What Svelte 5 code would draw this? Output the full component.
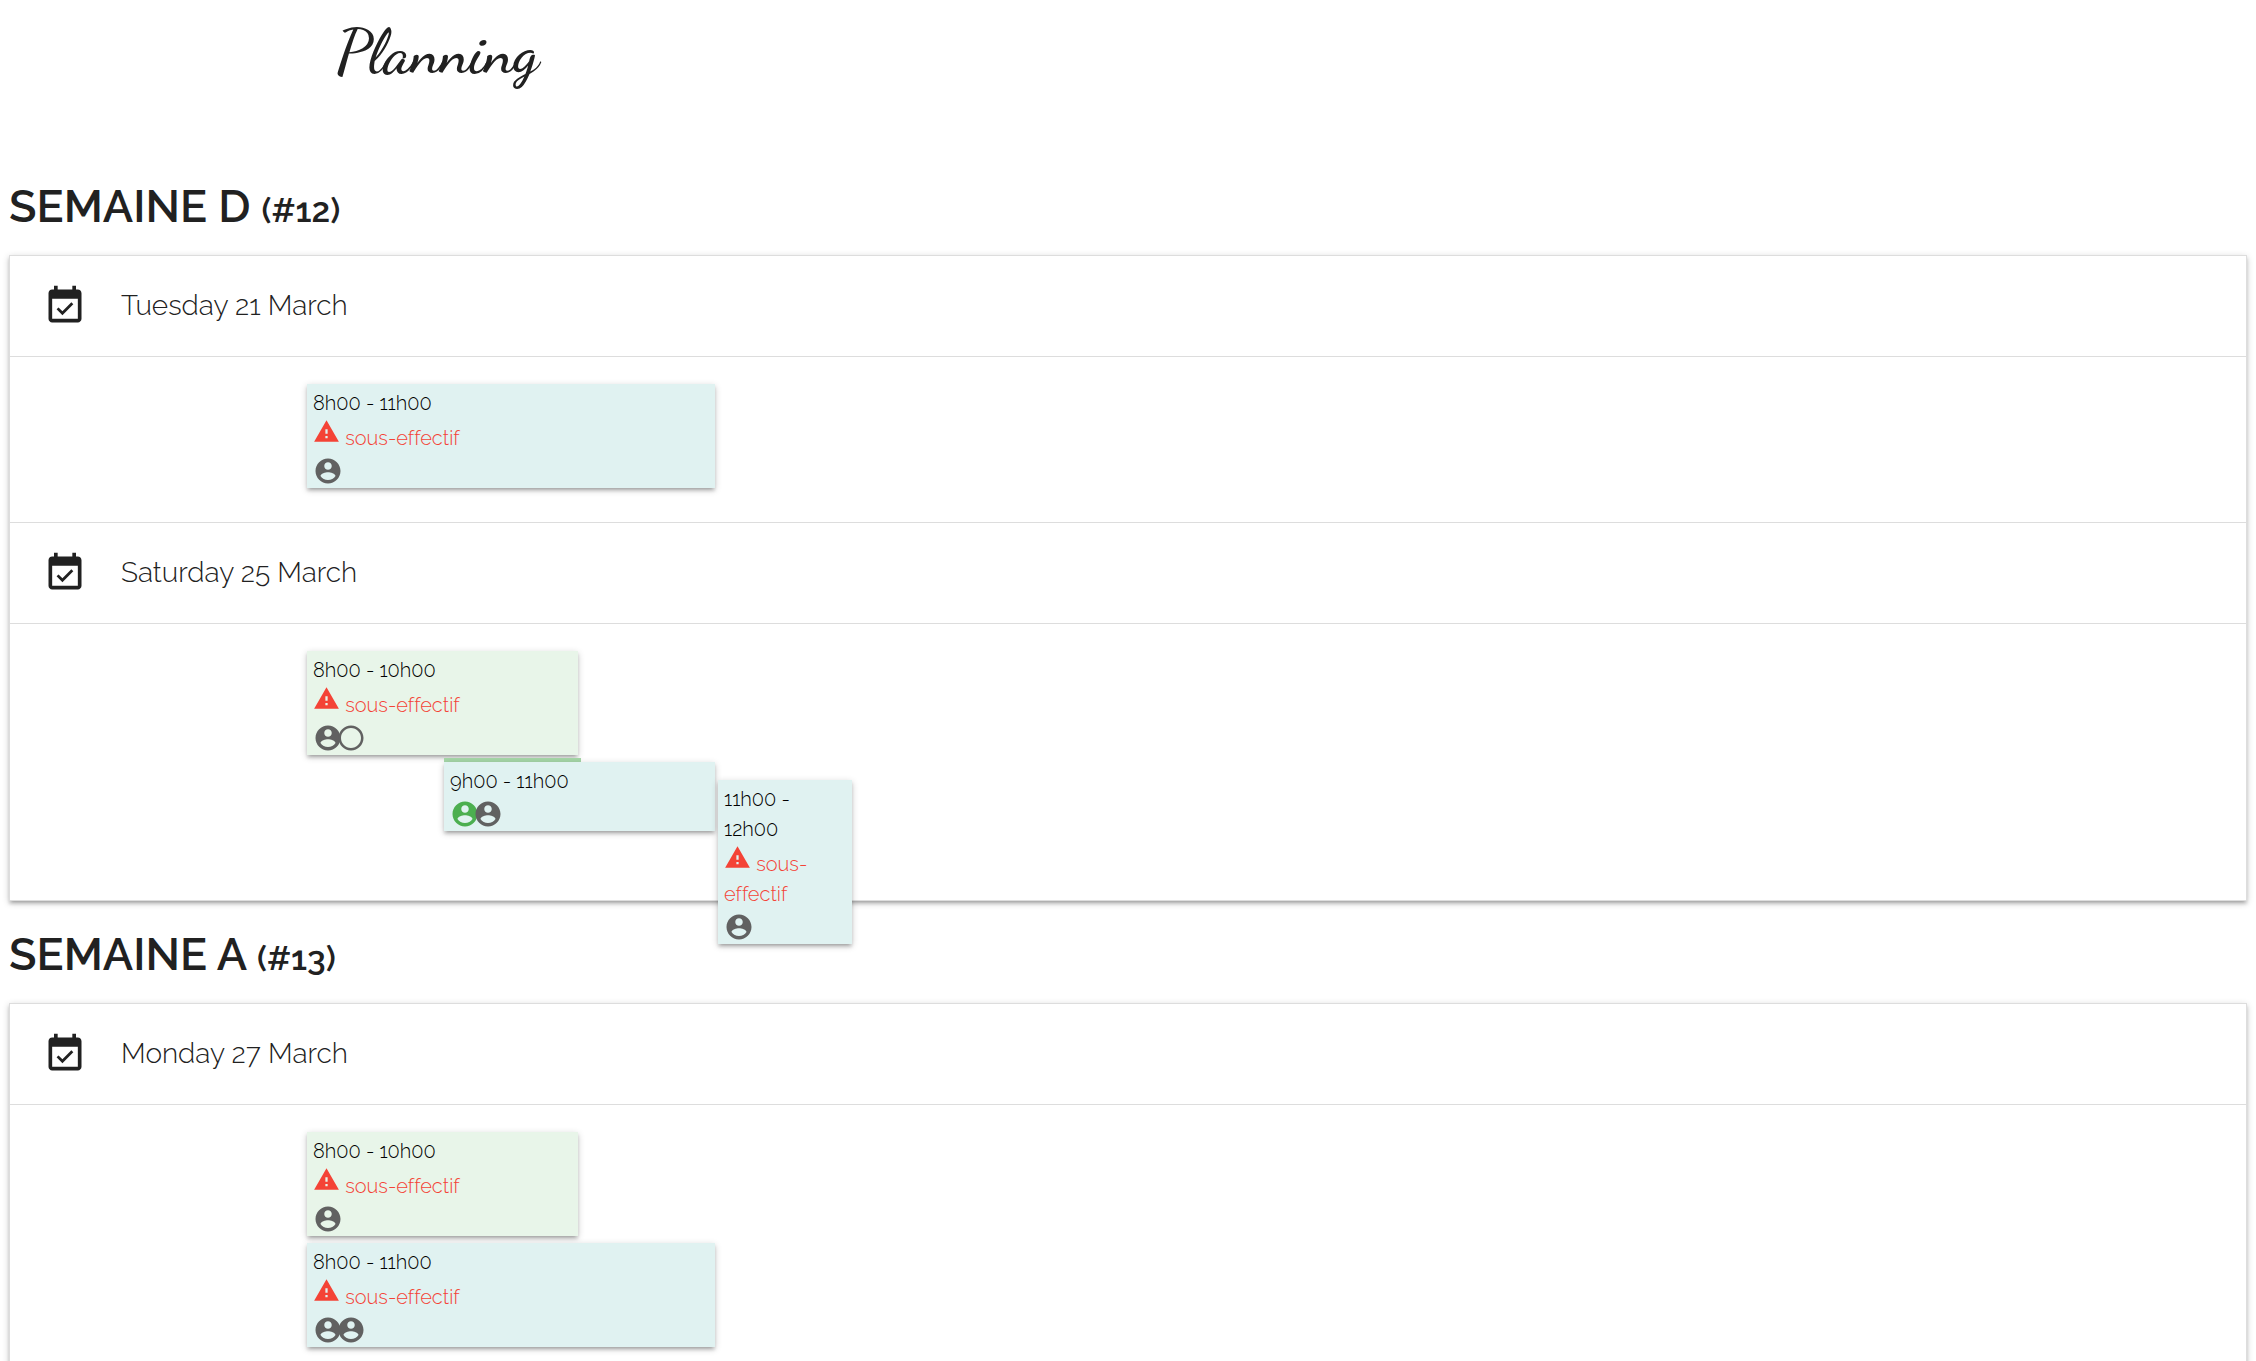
<script lang="ts">
  type Seat = 'taken' | 'mine' | 'free';

  interface Shift {
    start: number;
    end: number;
    lane: number;
    color: 'teal' | 'green';
    short: boolean;
    seats: Seat[];
    // hours shared with the shift drawn above
    overlap?: number;
  }

  interface Day {
    label: string;
    lanes: string;
    shifts: Shift[];
  }

  interface Week {
    name: string;
    number: number;
    days: Day[];
  }

  const FIRST_HOUR = 6;

  const weeks: Week[] = [
    {
      name: 'D',
      number: 12,
      days: [
        {
          label: 'Tuesday 21 March',
          lanes: 'auto',
          shifts: [
            { start: 8, end: 11, lane: 1, color: 'teal', short: true, seats: ['taken'] }
          ]
        },
        {
          label: 'Saturday 25 March',
          lanes: 'auto 11px 86px',
          shifts: [
            { start: 8, end: 10, lane: 1, color: 'green', short: true, seats: ['taken', 'free'] },
            { start: 9, end: 11, lane: 2, color: 'teal', short: false, seats: ['mine', 'taken'], overlap: 1 },
            { start: 11, end: 12, lane: 3, color: 'teal', short: true, seats: ['taken'] }
          ]
        }
      ]
    },
    {
      name: 'A',
      number: 13,
      days: [
        {
          label: 'Monday 27 March',
          lanes: 'auto auto',
          shifts: [
            { start: 8, end: 10, lane: 1, color: 'green', short: true, seats: ['taken'] },
            { start: 8, end: 11, lane: 2, color: 'teal', short: true, seats: ['taken', 'taken'] }
          ]
        }
      ]
    }
  ];

  function slotStyle(shift: Shift): string {
    const from = shift.start - FIRST_HOUR + 1;
    const to = shift.end - FIRST_HOUR + 1;
    return `grid-column: ${from} / ${to}; grid-row: ${shift.lane}`;
  }

  function overlapWidth(shift: Shift): number {
    return ((shift.overlap ?? 0) / (shift.end - shift.start)) * 100;
  }
</script>

<main>
  <h1>Planning</h1>

  {#each weeks as week}
    <section class="week">
      <h2>SEMAINE {week.name} <small>(#{week.number})</small></h2>

      <ul class="days">
        {#each week.days as day}
          <li class="day">
            <div class="day-header">
              <svg class="event-icon" viewBox="0 0 24 24" aria-hidden="true">
                <path d="M16.53 11.06L15.47 10l-4.88 4.88-2.12-2.12-1.06 1.06L10.59 17l5.94-5.94zM19 3h-1V1h-2v2H8V1H6v2H5c-1.11 0-1.99.9-1.99 2L3 19c0 1.1.89 2 2 2h14c1.1 0 2-.9 2-2V5c0-1.1-.9-2-2-2zm0 16H5V8h14v11z" />
              </svg>
              <span>{day.label}</span>
            </div>

            <div class="day-body" style="grid-template-rows: {day.lanes}">
              {#each day.shifts as shift}
                <div class="slot" style={slotStyle(shift)}>
                  {#if shift.overlap}
                    <div class="overlap" style="width: {overlapWidth(shift)}%"></div>
                  {/if}
                  <div class="shift {shift.color}">
                    <div class="hours">{shift.start}h00 - {shift.end}h00</div>
                    {#if shift.short}
                      <div class="warning">
                        <svg viewBox="0 0 24 24" aria-hidden="true">
                          <path d="M1 21h22L12 2 1 21zm12-3h-2v-2h2v2zm0-4h-2v-4h2v4z" />
                        </svg>
                        sous-effectif
                      </div>
                    {/if}
                    <div class="seats">
                      {#each shift.seats as seat}
                        <svg class={seat} viewBox="0 0 24 24" aria-hidden="true">
                          {#if seat === 'free'}
                            <path d="M12 2C6.48 2 2 6.48 2 12s4.48 10 10 10 10-4.48 10-10S17.52 2 12 2zm0 18c-4.42 0-8-3.58-8-8s3.58-8 8-8 8 3.58 8 8-3.58 8-8 8z" />
                          {:else}
                            <path d="M12 2C6.48 2 2 6.48 2 12s4.48 10 10 10 10-4.48 10-10S17.52 2 12 2zm0 3c1.66 0 3 1.34 3 3s-1.34 3-3 3-3-1.34-3-3 1.34-3 3-3zm0 14.2c-2.5 0-4.71-1.28-6-3.22.03-1.99 4-3.08 6-3.08 1.99 0 5.97 1.09 6 3.08-1.29 1.94-3.5 3.22-6 3.22z" />
                          {/if}
                        </svg>
                      {/each}
                    </div>
                  </div>
                </div>
              {/each}
            </div>
          </li>
        {/each}
      </ul>
    </section>
  {/each}
</main>

<style>
  :global(body) {
    background: #fff;
  }

  main {
    padding: 0 9px;
    font-family: Raleway, Lato, sans-serif;
    font-weight: 300;
    font-size: 20px;
    line-height: 30px;
    color: #212121;
  }

  h1 {
    margin: 0 0 78px;
    padding-left: 14.6%;
    font-family: Satisfy, 'Dancing Script', Lato, cursive;
    font-weight: 600;
    font-size: 62px;
    line-height: 104px;
  }

  h2 {
    margin: 0;
    font-weight: 600;
    font-size: 45px;
    line-height: 50px;
  }

  h2 small {
    font-size: 34px;
    line-height: 1;
  }

  .week {
    margin-bottom: 29px;
  }

  .days {
    list-style: none;
    margin: 23px 0 0;
    padding: 0;
    border: 1px solid #ddd;
    border-bottom: 0;
    box-shadow:
      0 3px 3px rgba(0, 0, 0, 0.14),
      0 4px 2px -3px rgba(0, 0, 0, 0.12),
      0 2px 7px rgba(0, 0, 0, 0.2);
  }

  .day-header {
    display: flex;
    align-items: center;
    gap: 34px;
    height: 100px;
    padding: 0 33px;
    border-bottom: 1px solid #ddd;
    font-size: 28px;
  }

  .event-icon {
    width: 44px;
    height: 44px;
    fill: currentColor;
  }

  /* one column per hour, from 6h to 22h */
  .day-body {
    display: grid;
    grid-template-columns: repeat(16, minmax(0, 1fr));
    row-gap: 7px;
    align-items: start;
    padding: 27px 22px 34px;
    border-bottom: 1px solid #ddd;
  }

  .slot {
    position: relative;
  }

  .overlap {
    position: absolute;
    top: -4px;
    left: 1px;
    height: 4px;
    background: #a5d6a7;
  }

  .shift {
    position: relative;
    margin: 0 2px 0 1px;
    padding: 4px 6px 2px;
    box-shadow:
      0 3px 3px rgba(0, 0, 0, 0.14),
      0 4px 2px -3px rgba(0, 0, 0, 0.12),
      0 2px 7px rgba(0, 0, 0, 0.2);
    color: #000;
    font-variant-ligatures: none;
  }

  .teal {
    background: #e0f2f1;
  }

  .green {
    background: #e8f5e9;
  }

  .warning {
    color: #f44336;
  }

  .warning svg {
    width: 27px;
    height: 27px;
    fill: currentColor;
  }

  .seats {
    display: flex;
    margin-top: 3px;
  }

  .seats svg {
    width: 30px;
    height: 30px;
    margin-right: -7px;
    fill: #616161;
  }

  .seats .mine {
    fill: #4caf50;
  }
</style>
